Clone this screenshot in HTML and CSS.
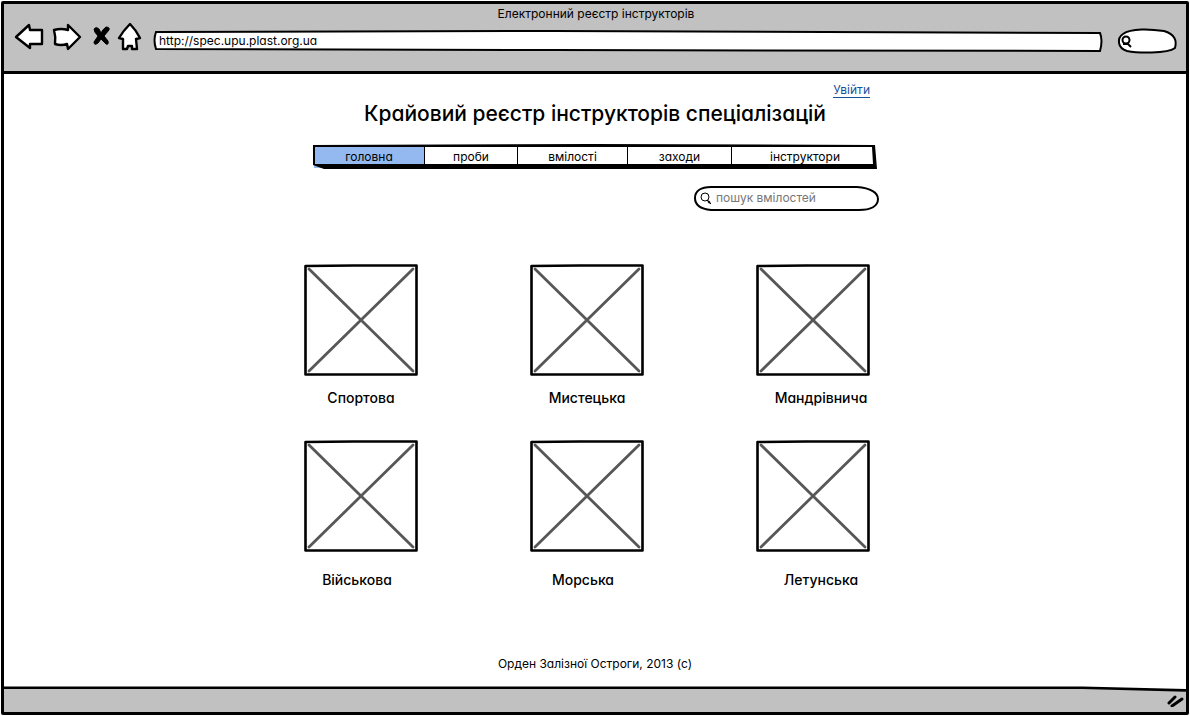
FILE: index.html
```html
<!DOCTYPE html>
<html lang="uk">
<head>
<meta charset="utf-8">
<meta name="viewport" content="width=device-width, initial-scale=1">
<title>Електронний реєстр інструкторів</title>
<link rel="stylesheet" href="styles.css">
</head>
<body>
<svg class="symbols" aria-hidden="true">
  <symbol id="placeholder" viewBox="0 0 114 112">
    <path d="M1.5 2 L50 1.5 H112.5 V110.5 H1.5 Z" fill="#fff" stroke="#000" stroke-width="2.6" stroke-linejoin="round"/>
    <path d="M5 5 L109 107 M109 5 L5 107" stroke="#575757" stroke-width="2.8" stroke-linecap="round"/>
  </symbol>
</svg>
<div class="window">
  <header class="chrome">
    <p class="chrome-title">Електронний реєстр інструкторів</p>
    <div class="toolbar">
      <button class="tool" type="button" aria-label="Назад">
        <svg width="28" height="28" viewBox="0 0 28 28"><path d="M1 13 L14 1 L15 6 L27 6 L27 20 L15 20 L15 24 Z"/></svg>
      </button>
      <button class="tool" type="button" aria-label="Вперед">
        <svg width="30" height="28" viewBox="0 0 30 28"><path d="M2 6 Q9 4 16 6 L16 1 L28 13 L16 25 L15 20 Q9 22 3 20 Q4 13 2 6 Z"/></svg>
      </button>
      <button class="tool" type="button" aria-label="Зупинити">
        <svg width="18" height="28" viewBox="0 0 18 28"><path class="solid" d="M3 5 Q5 2 8 5 L10 9 Q12 5 15 3 Q19 3 18 6 L13 12 L17 17 Q18 21 15 20 L10 15 L7 19 Q3 22 3 18 L7 12 Q3 8 3 5 Z"/></svg>
      </button>
      <button class="tool" type="button" aria-label="Додому">
        <svg width="24" height="28" viewBox="0 0 24 28"><path d="M12 0 Q18 6 22 14 L18 15 L19 25 L14 25 L14 22 L10 22 L9 25 L5 25 L5 15 L1 14 Q5 7 12 0 Z"/></svg>
      </button>
      <div class="field address">
        <svg class="sketch" viewBox="0 0 948 22" preserveAspectRatio="none"><path d="M3 2 L400 1 L946 3 Q949 10 946 21 L400 20 L3 19 Q0 10 3 2 Z"/></svg>
        <input type="text" aria-label="Адреса" value="http://spec.upu.plast.org.ua">
      </div>
      <div class="field quick">
        <svg class="sketch" viewBox="0 0 60 26" preserveAspectRatio="none"><path d="M6 6 C14 0 34 1 47 3 C58 6 60 13 58 20 C50 26 20 25 10 23 C0 20 0 10 6 6 Z"/></svg>
        <svg class="lens lens-bold" width="14" height="14" viewBox="0 0 14 14"><circle cx="7" cy="6" r="3.5"/><path d="M4 10 H9 L12 13"/></svg>
        <input type="search" aria-label="Швидкий пошук">
      </div>
    </div>
  </header>

  <main class="page">
    <a class="login" href="#login">Увійти</a>
    <h1>Крайовий реєстр інструкторів спеціалізацій</h1>
    <nav class="menu" aria-label="Головне меню">
      <a class="active" href="#home">головна</a>
      <a href="#tests">проби</a>
      <a href="#skills">вмілості</a>
      <a href="#events">заходи</a>
      <a href="#instructors">інструктори</a>
      <svg class="menu-frame" viewBox="0 0 566 26" preserveAspectRatio="none" aria-hidden="true">
        <path d="M1 1 L280 0 L563 1 L565 25 L12 25 L1 21 Z M3 3 L3 20 H561 L560 3 Z" fill-rule="evenodd"/>
      </svg>
    </nav>
    <div class="field search">
      <svg class="sketch" viewBox="0 0 186 26" preserveAspectRatio="none"><path d="M18 2 H164 C178 3 185 8 185 14 C185 21 178 25 166 25 H18 C7 24 2 20 2 13 C2 6 8 2 18 2 Z"/></svg>
      <svg class="lens" width="12" height="14" viewBox="0 0 12 14"><circle cx="5" cy="6" r="4"/><path d="M7 9 L11 13"/><path class="handle" d="M8 10 L10 12"/></svg>
      <input type="search" aria-label="Пошук вмілостей" placeholder="пошук вмілостей">
    </div>
    <div class="grid">
      <a class="card" href="#sport"><svg viewBox="0 0 114 112"><use href="#placeholder"/></svg><span>Спортова</span></a>
      <a class="card" href="#art"><svg viewBox="0 0 114 112"><use href="#placeholder"/></svg><span>Мистецька</span></a>
      <a class="card inset" href="#travel"><svg viewBox="0 0 114 112"><use href="#placeholder"/></svg><span>Мандрівнича</span></a>
      <a class="card low outset" href="#military"><svg viewBox="0 0 114 112"><use href="#placeholder"/></svg><span>Військова</span></a>
      <a class="card low outset" href="#sea"><svg viewBox="0 0 114 112"><use href="#placeholder"/></svg><span>Морська</span></a>
      <a class="card low inset" href="#air"><svg viewBox="0 0 114 112"><use href="#placeholder"/></svg><span>Летунська</span></a>
    </div>
    <p class="copyright">Орден Залізної Остроги, 2013 (с)</p>
  </main>

  <footer class="status">
    <svg class="status-line" viewBox="0 0 1184 30" preserveAspectRatio="none" aria-hidden="true"><path d="M0 2 H1080 L1184 5 V30 H0 Z" fill="#c1c1c1"/><path d="M0 2 H1080 L1184 5" fill="none" stroke="#000" stroke-width="3"/></svg>
    <svg class="grip" width="18" height="16" viewBox="0 0 18 16" aria-hidden="true"><path d="M3 12 L9 6 M6 15 L16 8"/></svg>
  </footer>
</div>
</body>
</html>
```

FILE: styles.css
```css
* {
  box-sizing: border-box;
}

body {
  margin: 0;
  padding: 1px;
  background: #fff;
  color: #000;
  font-family: Inter, "Noto Sans", sans-serif;
  font-feature-settings: "cv11";
  font-size: 12px;
  line-height: 16px;
}

p, h1 {
  margin: 0;
}

a {
  color: inherit;
  text-decoration: none;
}

.symbols {
  position: absolute;
  width: 0;
  height: 0;
}

.window {
  display: flex;
  flex-direction: column;
  min-height: calc(100vh - 2px);
  border: 3px solid #000;
  border-radius: 2px;
}

.chrome {
  padding: 2px 9px 17px 11px;
  border-bottom: 3px solid #000;
  background: #c1c1c1;
}

.chrome-title {
  text-align: center;
}

.toolbar {
  display: flex;
  align-items: center;
  gap: 9px;
  height: 32px;
}

.tool {
  display: block;
  padding: 0;
  border: 0;
  background: none;
}

.tool svg {
  display: block;
  overflow: visible;
  fill: #fff;
  stroke: #000;
  stroke-width: 2.4;
  stroke-linejoin: round;
}

.tool .solid {
  fill: #000;
  stroke-width: 1;
}

.field {
  position: relative;
  display: flex;
  align-items: center;
}

.field input {
  position: relative;
  flex: 1;
  min-width: 0;
  padding: 0;
  border: 0;
  outline: 0;
  background: transparent;
  color: #000;
  font: inherit;
  font-feature-settings: inherit;
}

.field input::placeholder {
  color: #777;
  opacity: 1;
}

.sketch {
  position: absolute;
  inset: 0;
  width: 100%;
  height: 100%;
  overflow: visible;
}

.sketch path {
  fill: #fff;
  stroke: #000;
  stroke-width: 2;
  vector-effect: non-scaling-stroke;
}

.address {
  flex: 1;
  height: 22px;
  margin: 6px 0 0 2px;
  padding: 0 6px;
}

.quick {
  width: 60px;
  height: 26px;
  margin: 6px 0 0 6px;
  padding: 0 8px 0 2px;
}

.lens {
  position: relative;
  flex: none;
  fill: none;
  stroke: #000;
  stroke-width: 1;
}

.lens .handle,
.lens-bold {
  stroke-width: 2;
}

.page {
  flex: 1;
  display: flex;
  flex-direction: column;
  width: 100%;
  max-width: 582px;
  margin: 0 auto;
}

.login {
  align-self: flex-end;
  margin: 9px 16px 0 0;
  border-bottom: 1px solid #17519a;
  color: #17519a;
  line-height: 14px;
}

h1 {
  margin-top: 2px;
  font-size: 21px;
  font-weight: 500;
  line-height: 28px;
  text-align: center;
}

.menu {
  position: relative;
  display: grid;
  grid-template-columns: 113fr 93fr 110fr 104fr 146fr;
  height: 26px;
  margin: 16px 8px 0;
  padding: 1px 0 4px;
}

.menu a {
  border-right: 1px solid #000;
  line-height: 23px;
  text-align: center;
}

.menu a:last-of-type {
  border-right: 0;
}

.menu .active {
  margin-left: 2px;
  background: #94b9f0;
}

.menu-frame {
  position: absolute;
  inset: 0;
  width: 100%;
  height: 100%;
  pointer-events: none;
}

.search {
  align-self: flex-end;
  width: 186px;
  height: 26px;
  margin: 15px 7px 0 0;
  padding: 0 14px 1px 7px;
  gap: 4px;
}

.grid {
  display: grid;
  grid-template-columns: repeat(3, 114px);
  justify-content: space-between;
  row-gap: 32px;
  margin: 53px 16px 0 0;
}

.card {
  display: flex;
  flex-direction: column;
  gap: 12px;
  font-size: 14px;
  font-weight: 500;
  line-height: 20px;
  text-align: center;
}

.card svg {
  display: block;
  width: 100%;
}

.low {
  gap: 18px;
}

.inset span {
  padding-left: 16px;
}

.outset span {
  padding-right: 8px;
}

.copyright {
  margin: auto 0 14px;
  text-align: center;
}

.status {
  position: relative;
  display: flex;
  justify-content: flex-end;
  align-items: center;
  height: 26px;
  padding-right: 2px;
}

.status-line {
  position: absolute;
  inset: 0;
  width: 100%;
  height: 100%;
}

.grip {
  position: relative;
  fill: none;
  stroke: #000;
  stroke-width: 3;
  stroke-linecap: round;
}
```
